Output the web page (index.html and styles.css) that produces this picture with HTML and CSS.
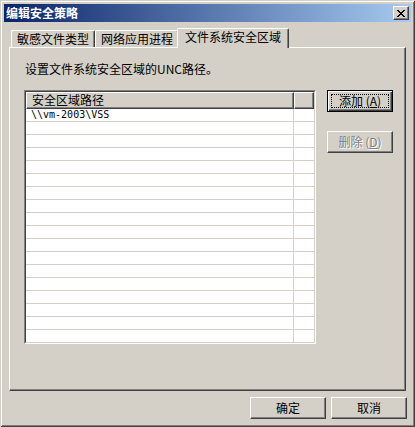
FILE: index.html
```html
<!DOCTYPE html>
<html>
<head>
<meta charset="utf-8">
<link rel="stylesheet" href="styles.css">
</head>
<body>
<div class="window">
  <div class="titlebar">
    <span class="title">编辑安全策略</span>
    <div class="close">
      <svg width="8" height="7" viewBox="0 0 8 7" shape-rendering="crispEdges"><path d="M0 0h2v1H0zM6 0h2v1H6zM1 1h2v1H1zM5 1h2v1H5zM2 2h4v1H2zM3 3h2v1H3zM2 4h4v1H2zM1 5h2v1H1zM5 5h2v1H5zM0 6h2v1H0zM6 6h2v1H6z" fill="#000"/></svg>
    </div>
  </div>
  <div class="body">
    <div class="tabs">
      <div class="tab">敏感文件类型</div>
      <div class="tab">网络应用进程</div>
      <div class="tab active">文件系统安全区域</div>
    </div>
    <div class="panel">
      <p class="desc">设置文件系统安全区域的UNC路径。</p>
      <div class="row">
        <div class="list">
          <div class="list-inner">
            <div class="header">
              <div class="hcell hcol1">安全区域路径</div>
              <div class="hcell hcol2"></div>
            </div>
            <div class="rows">
              <div class="lrow"><div class="c1">\\vm-2003\VSS</div><div class="c2"></div></div>
              <div class="lrow"><div class="c1"></div><div class="c2"></div></div>
              <div class="lrow"><div class="c1"></div><div class="c2"></div></div>
              <div class="lrow"><div class="c1"></div><div class="c2"></div></div>
              <div class="lrow"><div class="c1"></div><div class="c2"></div></div>
              <div class="lrow"><div class="c1"></div><div class="c2"></div></div>
              <div class="lrow"><div class="c1"></div><div class="c2"></div></div>
              <div class="lrow"><div class="c1"></div><div class="c2"></div></div>
              <div class="lrow"><div class="c1"></div><div class="c2"></div></div>
              <div class="lrow"><div class="c1"></div><div class="c2"></div></div>
              <div class="lrow"><div class="c1"></div><div class="c2"></div></div>
              <div class="lrow"><div class="c1"></div><div class="c2"></div></div>
              <div class="lrow"><div class="c1"></div><div class="c2"></div></div>
              <div class="lrow"><div class="c1"></div><div class="c2"></div></div>
              <div class="lrow"><div class="c1"></div><div class="c2"></div></div>
              <div class="lrow"><div class="c1"></div><div class="c2"></div></div>
              <div class="lrow"><div class="c1"></div><div class="c2"></div></div>
              <div class="lrow"><div class="c1"></div><div class="c2"></div></div>
            </div>
          </div>
        </div>
        <div class="side">
          <div class="btn default"><span class="focus">添加 (<u>A</u>)</span></div>
          <div class="btn disabled">删除 (<u>D</u>)</div>
        </div>
      </div>
    </div>
    <div class="footer">
      <div class="btn fbtn">确定</div>
      <div class="btn fbtn">取消</div>
    </div>
  </div>
</div>
</body>
</html>
```

FILE: styles.css
```css
html, body {
  margin: 0;
  padding: 0;
  background: #d4d0c8;
}
body {
  font-family: "SimSun", "Noto Sans CJK SC", sans-serif;
  font-size: 12px;
  color: #000;
}
.window {
  width: 415px;
  height: 427px;
  box-sizing: border-box;
  padding: 4px;
  background: #d4d0c8;
  display: flex;
  flex-direction: column;
  box-shadow: inset 1px 1px #d4d0c8, inset -1px -1px #404040, inset 2px 2px #ffffff, inset -2px -2px #808080;
}
.titlebar {
  height: 18px;
  background: linear-gradient(to right, #0a246a, #a6caf0);
  display: flex;
  align-items: center;
  justify-content: space-between;
  padding-left: 2px;
  padding-right: 2px;
}
.title {
  color: #fff;
  font-weight: bold;
  font-size: 12px;
  line-height: 14px;
}
.close {
  width: 16px;
  height: 14px;
  box-sizing: border-box;
  background: #d4d0c8;
  border: 1px solid;
  border-color: #fff #404040 #404040 #fff;
  box-shadow: inset -1px -1px #808080;
  display: flex;
  align-items: center;
  justify-content: center;
  padding-right: 1px;
}
.close svg { display: block; }
.body {
  flex: 1;
  display: flex;
  flex-direction: column;
  padding: 6px 5px 0 5px;
}
.tabs {
  display: flex;
  align-items: flex-end;
  height: 19px;
  padding-left: 2px;
}
.tab {
  box-sizing: border-box;
  height: 17px;
  width: 84px;
  border-top: 1px solid #fff;
  border-left: 1px solid #fff;
  border-right: 1px solid #404040;
  border-top-left-radius: 2px;
  border-top-right-radius: 2px;
  box-shadow: inset -1px 0 #808080;
  text-align: center;
  line-height: 16px;
  white-space: nowrap;
}
.tab.active {
  height: 20px;
  width: 112px;
  margin-left: -2px;
  margin-bottom: -1px;
  position: relative;
  z-index: 1;
  background: #d4d0c8;
  line-height: 16px;
}
.panel {
  box-sizing: border-box;
  height: 344px;
  border: 1px solid;
  border-color: #fff #404040 #404040 #fff;
  box-shadow: inset -1px -1px #808080;
  padding: 14px 0 0 14px;
}
.desc {
  margin: 0 0 0 1px;
  line-height: 14px;
  height: 14px;
}
.row {
  display: flex;
  margin-top: 14px;
}
.list {
  width: 292px;
  height: 254px;
  box-sizing: border-box;
  border: 1px solid;
  border-color: #808080 #fff #fff #808080;
}
.list-inner {
  height: 100%;
  box-sizing: border-box;
  border: 1px solid;
  border-color: #404040 #d4d0c8 #d4d0c8 #404040;
  background: #fff;
  overflow: hidden;
}
.header {
  display: flex;
  height: 17px;
}
.hcell {
  box-sizing: border-box;
  height: 17px;
  background: #d4d0c8;
  border: 1px solid;
  border-color: #fff #404040 #404040 #fff;
  box-shadow: inset -1px -1px #808080;
  line-height: 13px;
  padding-left: 5px;
  padding-bottom: 1px;
  white-space: nowrap;
  overflow: hidden;
}
.hcol1 { width: 268px; }
.hcol2 { flex: 1; }
.lrow {
  display: flex;
  height: 13px;
  box-sizing: border-box;
  border-bottom: 1px solid #d4d0c8;
}
.c1 {
  width: 268px;
  box-sizing: border-box;
  border-right: 1px solid #d4d0c8;
  font-family: "DejaVu Sans Mono", monospace;
  font-size: 10px;
  line-height: 12px;
  padding-left: 5px;
  white-space: nowrap;
}
.c2 { flex: 1; }
.side {
  display: flex;
  flex-direction: column;
  margin-left: 11px;
  gap: 19px;
}
.btn {
  box-sizing: border-box;
  width: 66px;
  height: 22px;
  background: #d4d0c8;
  border: 1px solid;
  border-color: #fff #404040 #404040 #fff;
  box-shadow: inset -1px -1px #808080;
  display: flex;
  align-items: center;
  justify-content: center;
  line-height: 14px;
  white-space: nowrap;
}
.btn.default {
  border: 1px solid #000;
  box-shadow: inset 1px 1px #fff, inset -1px -1px #404040, inset -2px -2px #808080;
  padding: 3px;
}
.focus {
  flex: 1;
  align-self: stretch;
  border: 1px dotted #000;
  display: flex;
  align-items: center;
  justify-content: center;
}
.btn.disabled {
  color: #808080;
  text-shadow: 1px 1px #fff;
}
.footer {
  display: flex;
  justify-content: flex-end;
  gap: 5px;
  margin-top: 6px;
  margin-right: -1px;
}
.fbtn {
  width: 76px;
}
```
